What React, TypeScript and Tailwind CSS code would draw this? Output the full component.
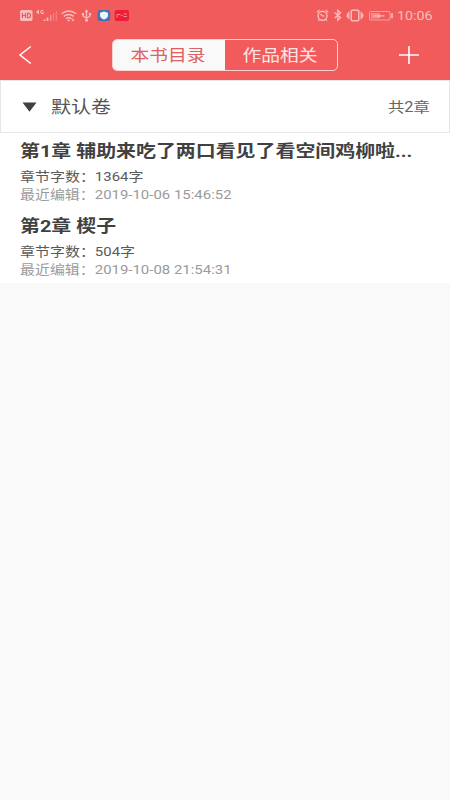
const chapters = [
  {
    title: "第1章 辅助来吃了两口看见了看空间鸡柳啦...",
    words: "1364字",
    edited: "2019-10-06 15:46:52",
  },
  { title: "第2章 楔子", words: "504字", edited: "2019-10-08 21:54:31" },
];

function StatusBar() {
  return (
    <div className="flex h-[30px] items-center justify-between pr-[17px] pl-[19px] text-[#fabcbb]">
      <svg width="111" height="14" viewBox="0 0 111 14" fill="none" stroke="currentColor">
        <rect x="1" y="2" width="12.5" height="11" rx="1.5" fill="currentColor" stroke="none" />
        <path d="M3.5 5v5M6.5 5v5M3.5 7.5h3M8.5 5.3v4.4h1.2q1.8 0 1.8-2.2t-1.8-2.2z" stroke="#e45858" strokeWidth="1.1" />
        <path d="M19.2 2l-1.7 2.5h2.5M19.5 2v4M24.2 2.5q-2.6-.8-2.6 1.5t2.6 1.5V4.2h-1" strokeWidth="1" />
        <path d="M25.5 13v-1.5M28.5 13V9.5" strokeWidth="1.8" />
        <path d="M31.7 13V7" strokeWidth="1.5" opacity=".6" />
        <path d="M34.6 13V5M37.4 13V3" strokeWidth="1.3" opacity=".35" />
        <path d="M42.5 5.8q7.3-5.6 14.6 0M44.8 8.4q5-3.7 10 0M47 10.8q2.8-2 5.6 0" strokeWidth="1.4" />
        <circle cx="49.6" cy="12.5" r="1" fill="currentColor" stroke="none" />
        <path d="M53.8 10.2v3M52.6 11.8l1.2 1.2 1.2-1.2" strokeWidth=".9" />
        <path d="M67.5 3v9M64 6v2l3.5 2.2L71 8V6" strokeWidth="1.3" />
        <path d="M65.5 4.2l2-2.9 2 2.9zM62.8 5h2.3v2.2h-2.3zM69.9 5h2.3v2.2h-2.3z" fill="currentColor" stroke="none" />
        <circle cx="67.5" cy="12.2" r="1.5" fill="currentColor" stroke="none" />
        <rect x="78.7" y="2" width="12.5" height="11" rx="2" fill="#4870b2" stroke="none" />
        <path d="M85 3.6l4 1.2v2.8q0 2.6-4 4-4-1.400-4-4V4.800z" fill="#eaf4fc" stroke="none" />
        <rect x="95.7" y="2" width="14.3" height="11" rx="2" fill="#f01b39" stroke="none" />
        <path d="M98 9.5V6.5h3.5M102 7.5h1.5M104.5 6h3.5M104.5 8.5h3.5" stroke="#f58a91" strokeWidth="1" />
      </svg>
      <div className="flex items-center">
        <svg width="81" height="14" viewBox="0 0 81 14" fill="none" stroke="currentColor">
          <circle cx="6.6" cy="7.7" r="4.5" strokeWidth="1.4" />
          <path d="M1 4.2l2.5-2.3M12.2 4.2L9.7 1.9M4.5 6l2.1 2h2.2M3.3 11.5l-1 1.3M9.9 11.5l1 1.3" strokeWidth="1.2" />
          <path d="M18.6 4.6l6 4.9-2.8 2.7V2.3l2.8 2.7-6 4.9" strokeWidth="1.3" />
          <rect x="35.2" y="2.3" width="7.6" height="10.4" rx="1" strokeWidth="1.5" />
          <path d="M32.8 3.8v7.5M45.2 3.8v7.5M31.4 5.5v4M46.6 5.5v4" strokeWidth="1.3" />
          <rect x="53.5" y="3.5" width="20.5" height="8.5" rx="1" strokeWidth="1" opacity=".7" />
          <rect x="55" y="5" width="8" height="5.5" fill="currentColor" stroke="none" opacity=".5" />
          <path d="M58 7.2h4.5l1.500-2v2h4.500v1.200h-4l-1.500 2-1-2h-4z" fill="currentColor" stroke="none" />
          <path d="M76 5.3v4.9" strokeWidth="1.7" />
        </svg>
        <span className="w-[36px] text-[13px] leading-none">
          <span className="inline-block origin-left scale-x-[1.1]">10:06</span>
        </span>
      </div>
    </div>
  );
}

function Header() {
  return (
    <header className="flex h-[50px] items-center justify-between pr-[30px] pl-[18px] text-white">
      <svg width="16" height="20" viewBox="0 0 16 20" fill="none" stroke="currentColor" strokeWidth="1.5">
        <path d="M12.8 1.5L2 10l10.8 8.5" />
      </svg>
      <div className="ml-[17px] flex h-[32px] w-[226px] overflow-hidden rounded-[5px] border border-[#fbd0d0] text-[16px]">
        <button className="flex w-[112px] items-center justify-center bg-[#f9f9f9] pt-[2px] text-[#dc6261]">
          <span className="scale-x-[1.17]">本书目录</span>
        </button>
        <button className="flex flex-1 items-center justify-center pt-[2px] text-[#fde5e4]">
          <span className="scale-x-[1.17]">作品相关</span>
        </button>
      </div>
      <svg width="22" height="20" viewBox="0 0 22 20" stroke="currentColor" strokeWidth="1.6">
        <path d="M1 10h20M11 1v18" />
      </svg>
    </header>
  );
}

function Chapter({ title, words, edited }: (typeof chapters)[number]) {
  return (
    <div className="h-[75px] pt-[5px] pl-[20px] whitespace-nowrap">
      <h2 className="w-fit origin-left scale-x-[1.172] text-[17px] leading-[26px] font-bold text-[#414141]">{title}</h2>
      <div className="mt-[4px] w-fit origin-left scale-x-[1.17] text-[12.8px] leading-[18px] text-[#5a5a5a]">
        章节字数：{words}
      </div>
      <div className="w-fit origin-left scale-x-[1.168] text-[12.8px] leading-[17px] text-[#9b9b9b]">
        最近编辑：{edited}
      </div>
    </div>
  );
}

export default function App() {
  return (
    <div className="h-[800px] w-[450px] overflow-hidden bg-[#f9f9f9] font-[Roboto,'Noto_Sans_CJK_SC',sans-serif]">
      <div className="h-[80px] bg-[#f15b5b]">
        <StatusBar />
        <Header />
      </div>
      <div className="flex h-[53px] items-center border border-[#e6e6e6] bg-white pr-[19px] pl-[21px] text-[#555]">
        <svg width="15" height="10" viewBox="0 0 15 10">
          <path d="M.5.5h14L7.5 9.8z" fill="#414141" />
        </svg>
        <span className="ml-[14px] origin-left scale-x-[1.176] pt-[2px] text-[17px]">默认卷</span>
        <span className="ml-auto origin-right scale-x-[1.17] pt-[2px] text-[14px] text-[#666]">共2章</span>
      </div>
      <div className="h-[150px] bg-white">
        {chapters.map((chapter) => (
          <Chapter key={chapter.title} {...chapter} />
        ))}
      </div>
    </div>
  );
}
